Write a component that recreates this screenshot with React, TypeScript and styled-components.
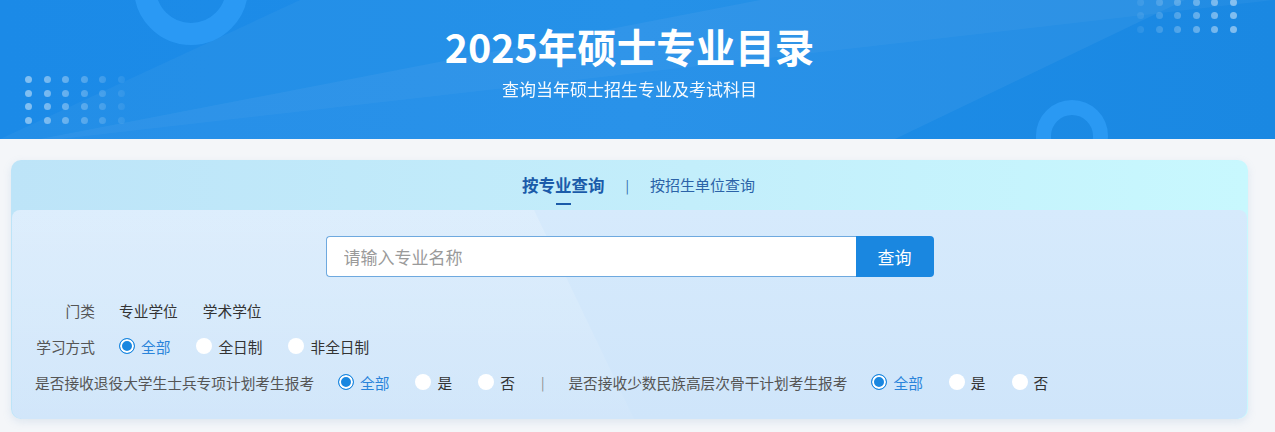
import React, { useState } from "react";
import styled, { createGlobalStyle } from "styled-components";

const GlobalStyle = createGlobalStyle`
  * { box-sizing: border-box; }
  body {
    margin: 0;
    background: #f4f6f9;
    font-family: "Noto Sans CJK SC", "Noto Sans", "Liberation Sans", sans-serif;
    color: #333;
  }
`;

const Page = styled.div`
  width: 1275px;
  min-height: 432px;
  background: #f4f6f9;
`;

/* ---------- 顶部 banner ---------- */
const Banner = styled.header`
  position: relative;
  height: 139px;
  overflow: hidden;
  background: linear-gradient(90deg, #1b8ae7 0%, #1e8de8 50%, #1a88e2 100%);
  display: flex;
  flex-direction: column;
  align-items: center;
  padding-right: 16px;
  color: #fff;
`;

const LightBand = styled.div<{ $points: string; $alpha: number }>`
  position: absolute;
  inset: 0;
  background: rgba(255, 255, 255, ${(p) => p.$alpha});
  clip-path: polygon(${(p) => p.$points});
  pointer-events: none;
`;

const Ring = styled.div<{ $x: number; $y: number; $r: number; $w: number }>`
  position: absolute;
  left: ${(p) => p.$x - p.$r}px;
  top: ${(p) => p.$y - p.$r}px;
  width: ${(p) => p.$r * 2}px;
  height: ${(p) => p.$r * 2}px;
  border-radius: 50%;
  border: ${(p) => p.$w}px solid rgba(48, 160, 250, 0.7);
`;

const DotGrid = styled.div<{ $x: number; $y: number; $dir: "left" | "right" }>`
  position: absolute;
  left: ${(p) => p.$x}px;
  top: ${(p) => p.$y}px;
  display: grid;
  grid-template-columns: repeat(6, 7px);
  column-gap: 11.5px;
  row-gap: 6.5px;
  -webkit-mask-image: linear-gradient(
    ${(p) => (p.$dir === "right" ? "90deg" : "270deg")},
    #000 10%,
    rgba(0, 0, 0, 0.15) 100%
  );
`;

const Dot = styled.span`
  width: 7px;
  height: 7px;
  border-radius: 50%;
  background: rgba(255, 255, 255, 0.45);
`;

const Title = styled.h1`
  position: relative;
  margin: 21px 0 0;
  font-size: 39.5px;
  line-height: 50px;
  font-weight: 700;
  letter-spacing: 0;
`;

const SubTitle = styled.p`
  position: relative;
  margin: 5px 0 0;
  font-size: 17px;
  line-height: 26px;
  font-weight: 400;
  opacity: 0.96;
`;

/* ---------- 查询卡片 ---------- */
const Main = styled.main`
  padding: 21px 27px 0 11px;
`;

const Card = styled.section`
  width: 1237px;
  border-radius: 10px;
  background: linear-gradient(90deg, #bde4f8 0%, #c3eefb 55%, #c8f8fe 100%);
  box-shadow: 0 3px 8px rgba(120, 160, 200, 0.18);
  overflow: hidden;
`;

const TabBar = styled.nav`
  height: 50px;
  display: flex;
  align-items: center;
  justify-content: center;
  padding-left: 18px;
`;

const Tab = styled.button<{ $active?: boolean }>`
  position: relative;
  border: 0;
  background: none;
  padding: 0;
  font-family: inherit;
  cursor: pointer;
  font-size: ${(p) => (p.$active ? "16.5px" : "15px")};
  font-weight: ${(p) => (p.$active ? 700 : 400)};
  color: ${(p) => (p.$active ? "#1b5ba9" : "#2b63a8")};
  line-height: 24px;

  &::after {
    content: "";
    display: ${(p) => (p.$active ? "block" : "none")};
    position: absolute;
    left: 50%;
    bottom: -8px;
    width: 15px;
    height: 2px;
    margin-left: -7px;
    background: #1b5ba9;
  }
`;

const TabSep = styled.span`
  margin: 0 21px;
  font-size: 13px;
  color: #2b63a8;
`;

const Body = styled.div`
  position: relative;
  margin: 0 1px;
  border-radius: 8px 8px 10px 10px;
  background: linear-gradient(180deg, #d6eafc 0%, #cfe5fa 100%);
  padding: 26px 0 19px;
  overflow: hidden;
`;

const BodyShade = styled.div`
  position: absolute;
  inset: 0;
  background: linear-gradient(180deg, rgba(255, 255, 255, 0.18), rgba(255, 255, 255, 0.05));
  clip-path: polygon(0 0, 522px 0, 622px 209px, 0 209px);
  pointer-events: none;
`;

const BodyInner = styled.div`
  position: relative;
`;

const SearchRow = styled.form`
  display: flex;
  justify-content: center;
  margin-bottom: 15px;
`;

const SearchInput = styled.input`
  width: 530px;
  height: 41px;
  border: 1px solid #6ea9df;
  border-right: 0;
  border-radius: 4px 0 0 4px;
  padding: 0 17px;
  font-family: inherit;
  font-size: 17px;
  color: #333;
  background: #fff;
  outline: none;

  &::placeholder {
    color: #9a9a9a;
  }
`;

const SearchButton = styled.button`
  width: 78px;
  height: 41px;
  border: 0;
  border-radius: 0 4px 4px 0;
  background: #1a87e0;
  color: #fff;
  font-family: inherit;
  font-size: 17px;
  cursor: pointer;
`;

const FilterRow = styled.div`
  display: flex;
  align-items: center;
  height: 36px;
  padding-left: 23px;
  font-size: 14.7px;
`;

const FilterLabel = styled.span`
  min-width: 60px;
  text-align: right;
  color: #555;
  margin-right: 24px;
  white-space: nowrap;
`;

const Plain = styled.span`
  color: #333;
  margin-right: 25px;
  cursor: pointer;
`;

const Option = styled.label<{ $checked: boolean }>`
  display: inline-flex;
  align-items: center;
  margin-right: 26px;
  cursor: pointer;
  color: ${(p) => (p.$checked ? "#2a84da" : "#333")};
`;

const RadioDot = styled.span<{ $checked: boolean }>`
  width: 16px;
  height: 16px;
  border-radius: 50%;
  margin-right: 6px;
  background: ${(p) => (p.$checked ? "#1a87e0" : "#fff")};
  border: ${(p) => (p.$checked ? "1px solid #1a87e0" : "0")};
  box-shadow: ${(p) => (p.$checked ? "inset 0 0 0 2px #fff" : "none")};
`;

const RowSep = styled.span`
  margin: 0 24px 0 0;
  color: #888;
  font-size: 13px;
`;

type RadioGroupProps = {
  options: string[];
  value: string;
  onChange: (v: string) => void;
};

const RadioGroup: React.FC<RadioGroupProps> = ({ options, value, onChange }) => (
  <>
    {options.map((o) => (
      <Option key={o} $checked={o === value} onClick={() => onChange(o)}>
        <RadioDot $checked={o === value} />
        {o}
      </Option>
    ))}
  </>
);

const dotsRow = Array.from({ length: 24 });

export default function App() {
  const [tab, setTab] = useState(0);
  const [mode, setMode] = useState("全部");
  const [soldier, setSoldier] = useState("全部");
  const [minority, setMinority] = useState("全部");

  return (
    <Page>
      <GlobalStyle />
      <Banner>
        <LightBand $alpha={0.05} $points="40px 139px, 895px 139px, 1185px 0, 760px 0" />
        <LightBand $alpha={0.035} $points="0 139px, 60px 139px, 1275px 0, 1275px 0, 300px 0" />
        <Ring $x={191} $y={-12} $r={57} $w={22} />
        <Ring $x={1072} $y={136} $r={36} $w={15} />
        <DotGrid $x={25} $y={76} $dir="right">
          {dotsRow.map((_, i) => (
            <Dot key={i} />
          ))}
        </DotGrid>
        <DotGrid $x={1137} $y={-15} $dir="left">
          {dotsRow.map((_, i) => (
            <Dot key={i} />
          ))}
        </DotGrid>
        <Title>2025年硕士专业目录</Title>
        <SubTitle>查询当年硕士招生专业及考试科目</SubTitle>
      </Banner>

      <Main>
        <Card>
          <TabBar>
            <Tab $active={tab === 0} onClick={() => setTab(0)}>
              按专业查询
            </Tab>
            <TabSep>|</TabSep>
            <Tab $active={tab === 1} onClick={() => setTab(1)}>
              按招生单位查询
            </Tab>
          </TabBar>

          <Body>
            <BodyShade />
            <BodyInner>
              <SearchRow onSubmit={(e) => e.preventDefault()}>
                <SearchInput placeholder="请输入专业名称" />
                <SearchButton type="submit">查询</SearchButton>
              </SearchRow>

              <FilterRow>
                <FilterLabel>门类</FilterLabel>
                <Plain>专业学位</Plain>
                <Plain>学术学位</Plain>
              </FilterRow>

              <FilterRow>
                <FilterLabel>学习方式</FilterLabel>
                <RadioGroup options={["全部", "全日制", "非全日制"]} value={mode} onChange={setMode} />
              </FilterRow>

              <FilterRow>
                <FilterLabel>是否接收退役大学生士兵专项计划考生报考</FilterLabel>
                <RadioGroup options={["全部", "是", "否"]} value={soldier} onChange={setSoldier} />
                <RowSep>|</RowSep>
                <FilterLabel>是否接收少数民族高层次骨干计划考生报考</FilterLabel>
                <RadioGroup options={["全部", "是", "否"]} value={minority} onChange={setMinority} />
              </FilterRow>
            </BodyInner>
          </Body>
        </Card>
      </Main>
    </Page>
  );
}
